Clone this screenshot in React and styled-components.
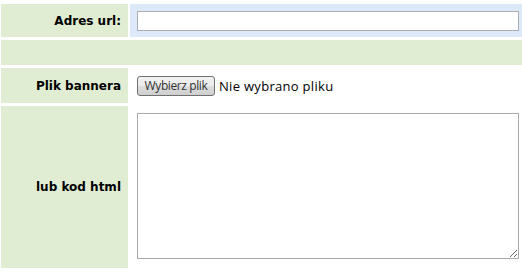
import React from 'react'
import styled, { createGlobalStyle } from 'styled-components'

const GlobalStyle = createGlobalStyle`
  html, body {
    margin: 0;
    padding: 0;
    overflow: hidden;
    background: #fff;
  }
`

const FormTable = styled.div`
  display: grid;
  grid-template-columns: 127px 396px;
  grid-template-rows: 33px 25px 35px 162px;
  column-gap: 2px;
  row-gap: 3px;
  padding: 4px 0 0 1px;
  font-family: 'DejaVu Sans', Verdana, sans-serif;
`

const Label = styled.div`
  background: #e1edd3;
  display: flex;
  align-items: center;
  justify-content: flex-end;
  padding-right: 7px;
  font-size: 12px;
  font-weight: bold;
  color: #000;
`

const Value = styled.div`
  background: ${({ $tint }) => $tint || 'transparent'};
  display: flex;
  align-items: ${({ $top }) => ($top ? 'flex-start' : 'center')};
  padding: ${({ $top }) => ($top ? '7px' : '0')} 7px 0 7px;
`

const Spacer = styled.div`
  grid-column: 1 / span 2;
  background: #e1edd3;
`

const UrlInput = styled.input`
  box-sizing: border-box;
  width: 382px;
  height: 20px;
  margin: 0;
  border: 1px solid #abadb3;
  background: #fff;
  outline: none;
`

const FilePick = styled.div`
  display: flex;
  align-items: center;
  gap: 4px;
  font-family: 'Open Sans', 'Noto Sans', sans-serif;
  font-size: 13px;
  letter-spacing: 0.3px;
  color: #000;
`

const PickButton = styled.span`
  box-sizing: border-box;
  display: inline-flex;
  align-items: center;
  justify-content: center;
  width: 78px;
  height: 20px;
  border: 1px solid #707070;
  border-radius: 3px;
  background: linear-gradient(#f2f2f2 0%, #ebebeb 50%, #dddddd 51%, #cfcfcf 100%);
  font-size: 12px;
  letter-spacing: -0.4px;
  color: #333;
`

const CodeArea = styled.textarea`
  box-sizing: border-box;
  width: 382px;
  height: 146px;
  margin: 0;
  border: 1px solid #a9a9a9;
  background: #fff;
  outline: none;
`

export default function App() {
  return (
    <>
      <GlobalStyle />
      <FormTable>
        <Label>Adres url:</Label>
        <Value $tint="#dbe9f8">
          <UrlInput type="text" />
        </Value>
        <Spacer />
        <Label>Plik bannera</Label>
        <Value>
          <FilePick>
            <PickButton>Wybierz plik</PickButton>
            <span>Nie wybrano pliku</span>
          </FilePick>
        </Value>
        <Label>lub kod html</Label>
        <Value $top>
          <CodeArea />
        </Value>
      </FormTable>
    </>
  )
}
